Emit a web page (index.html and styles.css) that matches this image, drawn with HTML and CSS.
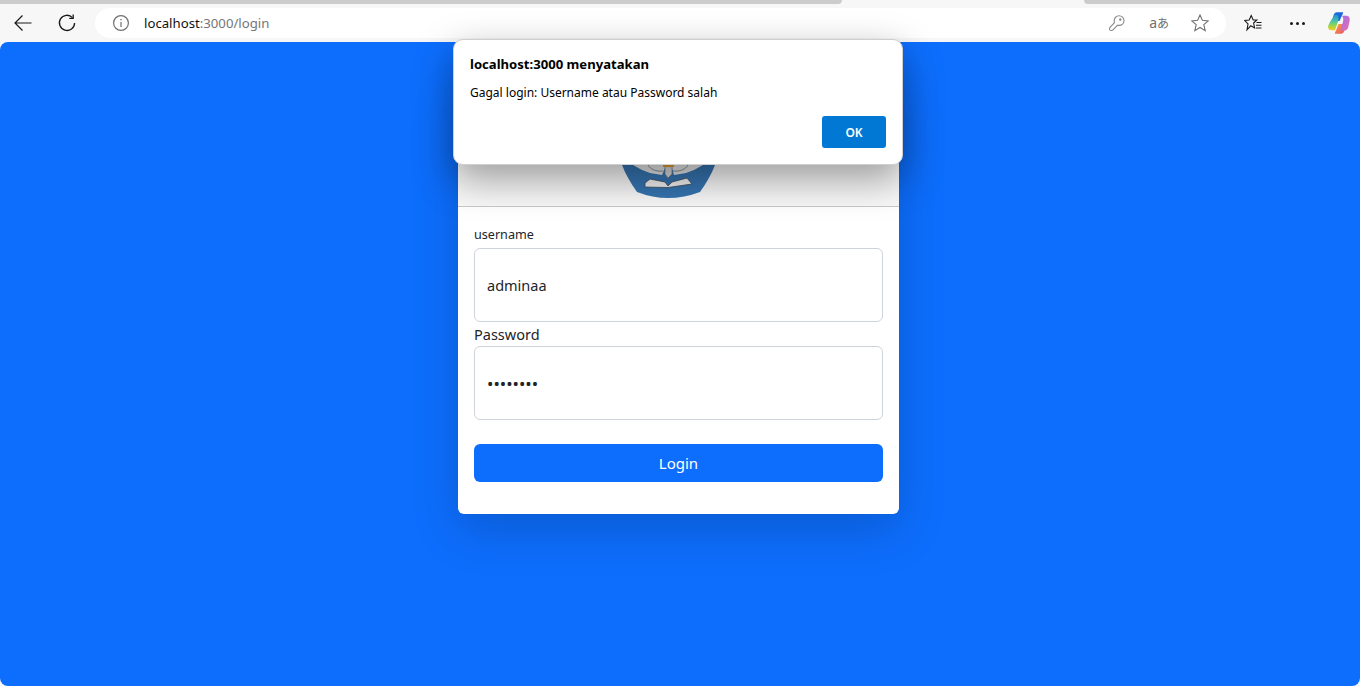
FILE: index.html
```html
<!DOCTYPE html>
<html>
<head>
    <title>Login</title>
    <link rel="stylesheet" href="styles.css">
</head>
<body>
    <div class="tabstrip">
        <div class="tab-gray tab-left"></div>
        <div class="tab-active"></div>
        <div class="tab-gray tab-right"></div>
    </div>
    <div class="toolbar">
        <svg class="icon icon-back" width="20" height="20" viewBox="0 0 20 20" fill="none" stroke="#1a1a1a" stroke-width="1.2">
            <path d="M2 10H18.5M9.5 2.5L2 10L9.5 17.5"/>
        </svg>
        <svg class="icon icon-reload" width="20" height="20" viewBox="0 0 20 20" fill="none" stroke="#1a1a1a" stroke-width="1.3">
            <path d="M15.5 4.6A7.6 7.6 0 1 0 17.6 10"/>
            <path d="M16.2 1.5V5.4H12.3"/>
        </svg>
        <div class="address">
            <svg class="icon-info" width="18" height="18" viewBox="0 0 18 18" fill="none" stroke="#707070" stroke-width="1.2">
                <circle cx="9" cy="9" r="7.4"/>
                <path d="M9 8V13"/>
                <path d="M9 5V6.2" stroke-width="1.4"/>
            </svg>
            <span class="url"><span class="host">localhost</span>:3000/login</span>
            <svg class="icon-key" width="16" height="16" viewBox="0 0 16 16" fill="none" stroke="#8a8a8a" stroke-width="1.1">
                <path d="M10 .8C12.8 .8 15 3 15 5.6C15 8.3 12.8 10.4 10 10.4C9.5 10.4 9 10.3 8.6 10.2L4 14.8C3.2 15.6 1.4 15.6 .9 15C.4 14.4 .5 13 1.2 12.2L5.5 7.7C5.3 7.2 5.2 6.6 5.2 5.8C5.2 3 7.3 .8 10 .8Z"/>
                <circle cx="11.3" cy="4.5" r=".7"/>
            </svg>
            <span class="translate">a<span class="translate-jp">あ</span></span>
            <svg class="icon-star" width="18" height="18" viewBox="0 0 18 18" fill="none" stroke="#707070" stroke-width="1.1">
                <path d="M9 1L11.4 6.3L17.2 6.9L12.8 10.7L14.2 16.6L9 13.5L3.8 16.6L5.2 10.7L.8 6.9L6.6 6.3Z"/>
            </svg>
        </div>
        <svg class="icon-fav" width="18" height="18" viewBox="0 0 18 18" fill="none" stroke="#1a1a1a" stroke-width="1.1">
            <path d="M7.2 1.5L9.2 6H12.8L9.6 9L10.6 14L6.8 11.8L3 15.8L4 10L.8 6.5L5.2 6Z"/>
            <path d="M12.5 8.5H17.5M12 11.2H17.5M12 14H17.5"/>
        </svg>
        <div class="dots"><span></span><span></span><span></span></div>
        <svg class="icon-copilot" width="24" height="24" viewBox="0 0 24 24">
            <defs>
                <linearGradient id="copilotLeft" x1="0" y1="0" x2="0" y2="1">
                    <stop offset="0" stop-color="#1f8fd8"/>
                    <stop offset=".45" stop-color="#4fc7a0"/>
                    <stop offset=".75" stop-color="#a8d63f"/>
                    <stop offset="1" stop-color="#f7c52e"/>
                </linearGradient>
                <linearGradient id="copilotRight" x1="0" y1="0" x2="1" y2="1">
                    <stop offset="0" stop-color="#9a6cf0"/>
                    <stop offset="1" stop-color="#ef6fa8"/>
                </linearGradient>
                <linearGradient id="copilotBottom" x1="0" y1="0" x2="1" y2="1">
                    <stop offset="0" stop-color="#f8a03a"/>
                    <stop offset="1" stop-color="#ea4f6a"/>
                </linearGradient>
            </defs>
            <path d="M15.5 1.2H10C8.3 1.2 7.2 2.4 6.7 4L5 10H12.5L15 4.6C15.7 3 16.8 1.2 15.5 1.2Z" fill="#1d68d8"/>
            <path d="M7 4.5C5.8 7.5 3 10 1.3 14.5C.5 17 1.8 19.2 4.2 19.2H8L11 10.5C12 7.5 11.4 3.6 9 3.6C8 3.6 7.4 3.9 7 4.5Z" fill="url(#copilotLeft)"/>
            <path d="M8.5 22.8H14C15.7 22.8 16.8 21.6 17.3 20L19 13H11.5L9 19.4C8.3 21 7.2 22.8 8.5 22.8Z" fill="url(#copilotBottom)"/>
            <path d="M15 4.8H19.8C22 4.8 23.2 7 22.7 9.5L21.2 16.5C20.6 18.6 19.2 19.6 17.4 19.6H13.2L16 11C16.6 8.6 16.4 6.4 15 4.8Z" fill="url(#copilotRight)"/>
        </svg>
    </div>

    <div class="page">
        <div class="card">
            <div class="card-header">
                <svg class="logo" width="100" height="108" viewBox="0 0 100 108">
                    <path d="M50 0L99 30L97 67Q92 80 82 94Q50 106 19 94Q9 80 4 67L1 30Z" fill="#3574b0"/>
                    <path d="M15 67L24 72L32 75L44 77L47 70V67Z" fill="#e6e6e6"/>
                    <path d="M85 67L76 72L68 75L56 77L54 70V67Z" fill="#e6e6e6"/>
                    <path d="M30 67C32 71 38 74 45 73M70 67C68 71 62 74 55 73" fill="none" stroke="#6c7a88" stroke-width=".8"/>
                    <path d="M47 67H54V76L50 80L47 76Z" fill="#d8d8d8" stroke="#6c7a88" stroke-width=".7"/>
                    <rect x="45" y="67" width="11" height="2" fill="#e09a2b"/>
                    <path d="M27 85L32 81L47 84L50 88L54 84L69 80L74 86L50 89.5L27 89Z" fill="#f0f0f0" stroke="#3d4a57" stroke-width=".8"/>
                </svg>
            </div>
            <form class="card-body">
                <label class="label-small" for="username">username</label>
                <input class="field" id="username" type="text" value="adminaa">
                <label class="label-large" for="password">Password</label>
                <input class="field field-password" id="password" type="password" value="adminaaa">
                <button class="btn-login" type="button">Login</button>
            </form>
        </div>
    </div>

    <div class="dialog">
        <div class="dialog-title">localhost:3000 menyatakan</div>
        <div class="dialog-text">Gagal login: Username atau Password salah</div>
        <div class="dialog-actions">
            <button class="dialog-ok" type="button">OK</button>
        </div>
    </div>
</body>
</html>
```

FILE: styles.css
```css
html, body {
    height: 100%;
}

body {
    margin: 0;
    overflow: hidden;
    background-color: #f7f7f7;
    font-family: "Noto Sans", "Open Sans", sans-serif;
}

.tabstrip {
    display: flex;
    height: 4px;
}

.tab-gray {
    background-color: #cccccc;
}

.tab-left {
    width: 842px;
    border-bottom-right-radius: 6px;
}

.tab-active {
    width: 242px;
}

.tab-right {
    flex: 1;
    border-bottom-left-radius: 6px;
}

.toolbar {
    display: flex;
    align-items: center;
    height: 38px;
}

.icon-back {
    margin-left: 13px;
}

.icon-reload {
    margin-left: 24px;
}

.address {
    display: flex;
    align-items: center;
    width: 1131px;
    height: 30px;
    margin-left: 18px;
    background-color: #ffffff;
    border-radius: 15px;
}

.icon-info {
    margin-left: 17px;
}

.url {
    margin-left: 14px;
    font-size: 13.2px;
    color: #767676;
}

.host {
    color: #111111;
}

.icon-key {
    margin-left: auto;
}

.translate {
    margin-left: 24px;
    font-size: 14px;
    color: #707070;
    line-height: 1;
}

.translate-jp {
    font-family: "Noto Sans CJK JP", sans-serif;
    font-size: 12px;
}

.icon-star {
    margin-left: 22px;
    margin-right: 17px;
}

.icon-fav {
    margin-left: 18px;
}

.dots {
    display: flex;
    gap: 3px;
    margin-left: 28px;
}

.dots span {
    width: 3px;
    height: 3px;
    border-radius: 50%;
    background-color: #1a1a1a;
}

.icon-copilot {
    margin-left: 22px;
}

.page {
    display: flex;
    justify-content: center;
    align-items: flex-start;
    height: 644px;
    background-color: #0d6efd;
    border-radius: 8px;
    box-sizing: border-box;
    padding-top: 40px;
    padding-right: 3px;
}

.card {
    width: 441px;
    background-color: #ffffff;
    border-radius: 6px;
    box-shadow: 0 16px 48px rgba(0, 0, 0, 0.175);
}

.card-header {
    display: flex;
    justify-content: center;
    height: 124px;
    background-color: #f8f8f8;
    border-bottom: 1px solid #c9c9c9;
    border-radius: 6px 6px 0 0;
}

.logo {
    margin-top: 16px;
    margin-right: 21px;
}

.card-body {
    display: flex;
    flex-direction: column;
    padding: 18px 16px 32px;
}

.label-small {
    font-size: 12.6px;
    line-height: 20px;
    color: #212529;
    margin-bottom: 3px;
}

.label-large {
    font-size: 14.5px;
    line-height: 24px;
    color: #212529;
}

.field {
    box-sizing: border-box;
    height: 74px;
    padding: 0 12px;
    border: 1px solid #ced4da;
    border-radius: 6px;
    font-family: inherit;
    font-size: 14.5px;
    color: #212529;
    background-color: #ffffff;
}

.field-password {
    font-size: 17px;
}

.btn-login {
    height: 38px;
    margin-top: 24px;
    border: none;
    border-radius: 6px;
    background-color: #0d6efd;
    color: #ffffff;
    font-family: inherit;
    font-size: 15px;
}

.dialog {
    position: absolute;
    left: 453px;
    top: 39px;
    box-sizing: border-box;
    width: 450px;
    height: 126px;
    padding: 15px 16px 16px 16px;
    background-color: #ffffff;
    border: 1px solid #cfcfcf;
    border-radius: 10px;
    box-shadow: 0 14px 38px rgba(0, 0, 0, 0.38);
}

.dialog-title {
    font-size: 13.1px;
    font-weight: 700;
    line-height: 18px;
    color: #000000;
}

.dialog-text {
    margin-top: 11px;
    font-size: 12px;
    line-height: 18px;
    color: #000000;
}

.dialog-actions {
    display: flex;
    justify-content: flex-end;
    margin-top: 14px;
}

.dialog-ok {
    width: 64px;
    height: 32px;
    border: none;
    border-radius: 3px;
    background-color: #0078d4;
    color: #ffffff;
    font-family: inherit;
    font-size: 12px;
    font-weight: 600;
}
```
